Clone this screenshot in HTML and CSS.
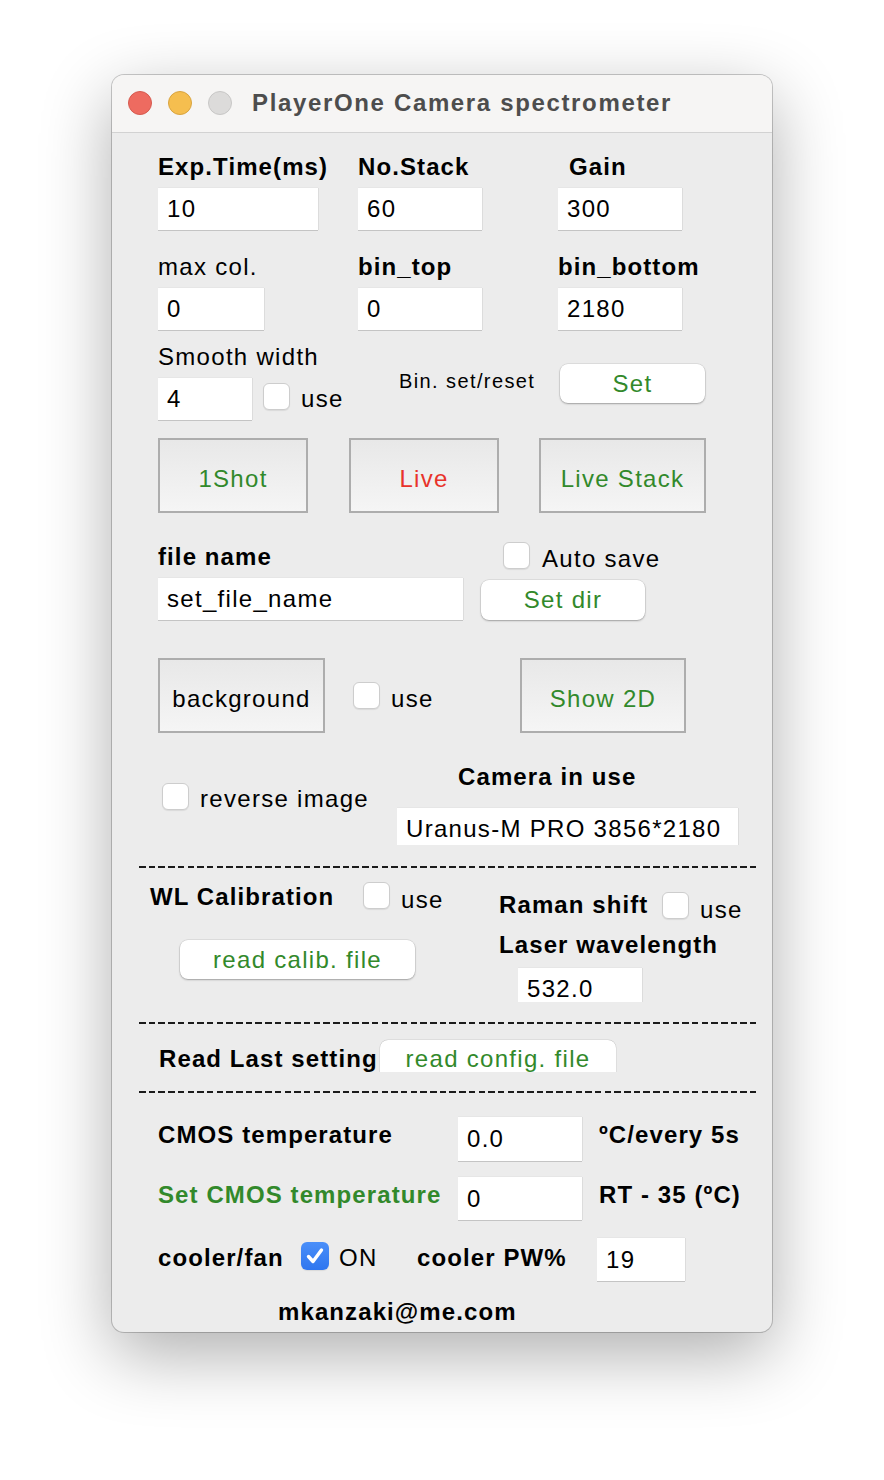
FILE: index.html
```html
<!DOCTYPE html>
<html>
<head>
<meta charset="utf-8">
<title>PlayerOne Camera spectrometer</title>
<link rel="stylesheet" href="styles.css">
</head>
<body>
<div class="window">
  <div class="titlebar">
    <span class="light red"></span>
    <span class="light yellow"></span>
    <span class="light gray"></span>
    <span class="title">PlayerOne Camera spectrometer</span>
  </div>
  <div class="content">
    <div class="row r1">
      <div class="field w200"><div class="lbl b">Exp.Time(ms)</div><div class="entry e160">10</div></div>
      <div class="field w200"><div class="lbl b">No.Stack</div><div class="entry e124">60</div></div>
      <div class="field"><div class="lbl b pl11">Gain</div><div class="entry e124">300</div></div>
    </div>
    <div class="row r2">
      <div class="field w200"><div class="lbl">max col.</div><div class="entry e106">0</div></div>
      <div class="field w200"><div class="lbl b">bin_top</div><div class="entry e124">0</div></div>
      <div class="field"><div class="lbl b">bin_bottom</div><div class="entry e124">2180</div></div>
    </div>
    <div class="row r3">
      <div class="field w241">
        <div class="lbl">Smooth width</div>
        <div class="inline">
          <div class="entry e94">4</div>
          <span class="check ml11 mt5"></span>
          <span class="txt ml11 mt6">use</span>
        </div>
      </div>
      <div class="small w161">Bin. set/reset</div>
      <div class="pbtn setbtn green">Set</div>
    </div>
    <div class="row r4">
      <div class="bevel w150 green">1Shot</div>
      <div class="bevel w150 red-t ml41">Live</div>
      <div class="bevel w167 green ml40">Live Stack</div>
    </div>
    <div class="row r5a">
      <div class="lbl b w345">file name</div>
      <span class="check"></span>
      <span class="txt ml12 mt2">Auto save</span>
    </div>
    <div class="row">
      <div class="entry e305">set_file_name</div>
      <div class="pbtn setdir green">Set dir</div>
    </div>
    <div class="row r6">
      <div class="bevel w167">background</div>
      <span class="check ml28 mt24"></span>
      <span class="txt ml11 mt26 w129">use</span>
      <div class="bevel w166 green">Show 2D</div>
    </div>
    <div class="row r7">
      <div class="inline w239">
        <span class="check ml4 mt21"></span>
        <span class="txt ml11 mt22">reverse image</span>
      </div>
      <div class="field w341">
        <div class="lbl b cam-lbl">Camera in use</div>
        <div class="entry clip e341">Uranus-M PRO 3856*2180</div>
      </div>
    </div>
    <div class="dash d1"></div>
    <div class="row r8">
      <div class="field w349 wl">
        <div class="inline h30">
          <span class="lbl b w213">WL Calibration</span>
          <span class="check"></span>
          <span class="txt ml11 mt3">use</span>
        </div>
        <div class="pbtn calib green">read calib. file</div>
      </div>
      <div class="field raman">
        <div class="inline h40">
          <span class="lbl b w163">Raman shift</span>
          <span class="check mt2"></span>
          <span class="txt ml11 mt5">use</span>
        </div>
        <div class="lbl b h38">Laser wavelength</div>
        <div class="entry clip laser">532.0</div>
      </div>
    </div>
    <div class="dash d2"></div>
    <div class="row r9">
      <div class="lbl b w221 mt4">Read Last setting</div>
      <div class="pbtn config green">read config. file</div>
    </div>
    <div class="dash d3"></div>
    <div class="row r10">
      <div class="lbl b w300 mt3">CMOS temperature</div>
      <div class="entry e124 h44">0.0</div>
      <div class="lbl b ml17 mt3">ºC/every 5s</div>
    </div>
    <div class="row r11">
      <div class="lbl b w300 mt3 green">Set CMOS temperature</div>
      <div class="entry e124 h43">0</div>
      <div class="lbl b ml17 mt3">RT - 35 (ºC)</div>
    </div>
    <div class="row r12">
      <div class="lbl b w143 mt5">cooler/fan</div>
      <span class="check checked mt4"><svg viewBox="0 0 28 28" width="28" height="28"><path d="M7.5 14.5 L12 19.5 L20.5 8" fill="none" stroke="#fff" stroke-width="3.4" stroke-linecap="round" stroke-linejoin="round"/></svg></span>
      <span class="txt ml10 mt5 w78">ON</span>
      <div class="lbl b w180 mt5">cooler PW%</div>
      <div class="entry e88 h43">19</div>
    </div>
    <div class="row r13">
      <div class="lbl b">mkanzaki@me.com</div>
    </div>
  </div>
</div>
</body>
</html>
```
FILE: styles.css
```css
* { box-sizing: border-box; }
html { margin: 0; padding: 0; background: #ffffff; }
body {
  margin: 0;
  padding: 75px 0 148px 112px;
  min-height: 1480px;
  background: #ffffff;
  font-family: "Liberation Sans", Arial, Helvetica, sans-serif;
  font-size: 24px;
  color: #000;
  letter-spacing: 1.3px;
}
.window {
  width: 660px;
  height: 1257px;
  border-radius: 12px;
  background: #ececec;
  overflow: hidden;
  box-shadow: 0 0 0 1px rgba(0,0,0,0.2), 0 22px 70px rgba(0,0,0,0.32);
}
.titlebar {
  height: 58px;
  background: #f6f5f4;
  border-bottom: 1px solid #d2d2d2;
  display: flex;
  align-items: center;
  padding-left: 16px;
  padding-bottom: 1px;
}
.light {
  width: 24px; height: 24px; border-radius: 50%;
  margin-right: 16px;
  flex: none;
}
.light.red { background: #ee6b60; border: 1px solid #d65a4f; }
.light.yellow { background: #f5be4f; border: 1px solid #d9a43f; }
.light.gray { background: #dcdbda; border: 1px solid #c8c7c6; margin-right: 20px; }
.title {
  font-weight: bold;
  color: #4d4d4d;
  letter-spacing: 1.65px;
  line-height: 30px;
}
.content { padding-left: 46px; }
.row { display: flex; align-items: flex-start; }
.field { display: flex; flex-direction: column; flex: none; }
.inline { display: flex; align-items: flex-start; flex: none; }
.lbl { line-height: 30px; height: 36px; white-space: nowrap; flex: none; }
.b { font-weight: bold; letter-spacing: 1.1px; }
.txt { line-height: 30px; white-space: nowrap; flex: none; }
.small { font-size: 20px; line-height: 24px; letter-spacing: 1.4px; margin-top: 27px; flex: none; }
.green { color: #32892b; }
.red-t { color: #e8332b; }

.entry {
  background: #fff;
  height: 42px;
  line-height: 42px;
  padding-left: 9px;
  box-shadow: 0 1px 0 #c4c4c4, 1px 0 0 #dcdcdc, 0 -1px 0 #e6e6e6;
  white-space: nowrap;
  flex: none;
}
.entry.clip { overflow: hidden; box-shadow: 1px 0 0 #dcdcdc, 0 -1px 0 #e6e6e6; }
.e160 { width: 160px; }
.e124 { width: 124px; }
.e106 { width: 106px; }
.e94 { width: 94px; }
.e305 { width: 305px; }
.e341 { width: 341px; height: 37px; }
.e88 { width: 88px; }
.h44 { height: 44px; line-height: 44px; }
.h43 { height: 43px; line-height: 43px; }

.check {
  width: 27px; height: 27px;
  border-radius: 6px;
  background: #fff;
  border: 1px solid #cdcdcd;
  box-shadow: 0 1px 1px rgba(0,0,0,0.08);
  flex: none;
  display: block;
}
.check.checked {
  width: 28px; height: 28px;
  border: none;
  background: linear-gradient(#4a8ff9, #2f76ef);
}
.check.checked svg { display: block; }

.bevel {
  height: 75px;
  border: 2px solid #adadad;
  background: linear-gradient(#e8e8e8, #f5f5f5);
  display: flex;
  align-items: center;
  justify-content: center;
  padding-top: 7px;
  flex: none;
  white-space: nowrap;
}
.pbtn {
  background: #fff;
  border-radius: 8px;
  box-shadow: 0 0 0 0.5px rgba(0,0,0,0.12), 0 1px 2px rgba(0,0,0,0.28);
  display: flex;
  align-items: center;
  justify-content: center;
  flex: none;
  white-space: nowrap;
}
.setbtn { width: 145px; height: 39px; margin-top: 22px; }
.setdir { width: 164px; height: 40px; margin-left: 18px; margin-top: 2px; }
.calib { width: 235px; height: 39px; margin-left: 30px; margin-top: 28px; }
.config {
  width: 236px; height: 32px;
  border-radius: 8px 8px 0 0;
  align-items: flex-start;
  line-height: 30px;
  padding-top: 4px;
  box-shadow: 0 -0.5px 0 rgba(0,0,0,0.12), 0.5px 0 0 rgba(0,0,0,0.12), -0.5px 0 0 rgba(0,0,0,0.12);
}

.dash {
  height: 2px;
  width: 617px;
  margin-left: -19px;
  background: repeating-linear-gradient(90deg, #1b1b1b 0 6.5px, transparent 6.5px 9.7px);
}

/* widths */
.w200 { width: 200px; }
.w241 { width: 241px; }
.w161 { width: 161px; }
.w150 { width: 150px; }
.w167 { width: 167px; }
.w166 { width: 166px; }
.w345 { width: 345px; }
.w129 { width: 129px; }
.w239 { width: 239px; }
.w341 { width: 341px; }
.w349 { width: 349px; }
.w213 { width: 213px; }
.w163 { width: 163px; }
.w221 { width: 221px; }
.w300 { width: 300px; }
.w143 { width: 143px; }
.w78 { width: 78px; }
.w180 { width: 180px; }
.h30 { height: 30px; }
.h40 { height: 40px; }
.h38 { height: 38px; }
.pl11 { padding-left: 11px; }

/* margins */
.ml4 { margin-left: 4px; }
.ml10 { margin-left: 10px; }
.ml11 { margin-left: 11px; }
.ml12 { margin-left: 12px; }
.ml17 { margin-left: 17px; }
.ml28 { margin-left: 28px; }
.ml40 { margin-left: 40px; }
.ml41 { margin-left: 41px; }
.mt2 { margin-top: 2px; }
.mt3 { margin-top: 3px; }
.mt4 { margin-top: 4px; }
.mt5 { margin-top: 5px; }
.mt6 { margin-top: 6px; }
.mt21 { margin-top: 21px; }
.mt22 { margin-top: 22px; }
.mt24 { margin-top: 24px; }
.mt26 { margin-top: 26px; }

/* rows vertical rhythm */
.r1 { margin-top: 19px; }
.r2 { margin-top: 22px; }
.r3 { margin-top: 12px; }
.r4 { margin-top: 18px; }
.r5a { margin-top: 29px; height: 36px; }
.r6 { margin-top: 38px; }
.r7 { margin-top: 29px; }
.cam-lbl { height: 46px; padding-left: 61px; }
.d1 { margin-top: 21px; }
.r8 { margin-top: 14px; }
.wl { margin-left: -8px; }
.raman { margin-top: 8px; }
.laser { width: 124px; height: 34px; margin-left: 19px; }
.d2 { margin-top: 20px; }
.r9 { margin-top: 16px; height: 32px; }
.r9 .lbl { margin-left: 1px; height: 28px; }
.d3 { margin-top: 19px; }
.r10 { margin-top: 24px; }
.r11 { margin-top: 16px; }
.r12 { margin-top: 18px; }
.r13 { margin-top: 16px; margin-left: 120px; }
```
